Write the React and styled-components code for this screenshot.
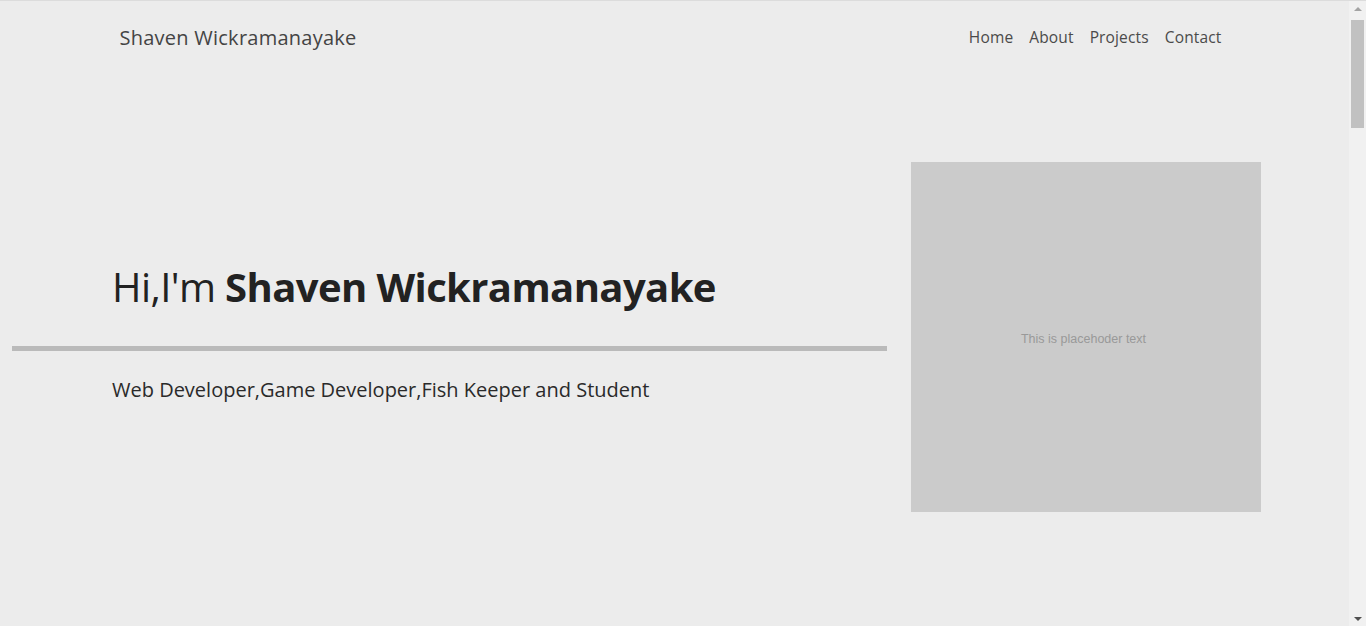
import styled, { createGlobalStyle } from 'styled-components';

const GlobalStyle = createGlobalStyle`
  html, body {
    margin: 0;
    padding: 0;
  }
  body {
    background: #ececec;
    border-top: 1px solid #dcdcdc;
    font-family: "Open Sans", "Noto Sans", sans-serif;
    color: #212529;
    overflow: hidden;
  }
`;

const Shell = styled.div`
  display: flex;
  height: calc(100vh - 1px);
`;

const Page = styled.main`
  flex: 1;
  min-width: 0;
`;

const ScrollBar = styled.div`
  flex: 0 0 17px;
  display: flex;
  flex-direction: column;
  align-items: center;
  background: #f1f1f1;
`;

const Arrow = styled.div`
  flex: 0 0 17px;
  display: flex;
  align-items: center;
  justify-content: center;

  &::before {
    content: '';
    border-left: 4px solid transparent;
    border-right: 4px solid transparent;
    ${(p) =>
      p.$down
        ? 'border-top: 4px solid #505050; margin-top: 2px;'
        : 'border-bottom: 4px solid #a3a3a3; margin-top: -2px;'}
  }
`;

const Track = styled.div`
  flex: 1;
  width: 100%;
  display: flex;
  justify-content: center;
  padding-top: 2px;
`;

const Thumb = styled.div`
  width: 13px;
  height: 108px;
  background: #c1c1c1;
`;

const NavBar = styled.nav`
  max-width: 1140px;
  margin: 0 auto;
  padding: 0 15px;
  height: 72px;
  display: flex;
  align-items: center;
  justify-content: space-between;
  box-sizing: border-box;
`;

const Brand = styled.a`
  font-size: 20px;
  color: #444;
  text-decoration: none;
  letter-spacing: 0.25px;
`;

const NavList = styled.ul`
  display: flex;
  list-style: none;
  margin: 0;
  padding: 0;
`;

const NavLink = styled.a`
  display: block;
  padding: 8px 8px;
  font-size: 15.5px;
  color: #4a4a4a;
  text-decoration: none;
  letter-spacing: 0.15px;
`;

const Hero = styled.section`
  display: flex;
  align-items: center;
  padding: 89px 0 0 12px;
`;

const Intro = styled.div`
  flex: 0 0 875px;
  display: flex;
  flex-direction: column;
  padding-bottom: 8px;
`;

const Greeting = styled.h1`
  margin: 0;
  padding: 0 0 0 100px;
  font-size: 40px;
  font-weight: 400;
  line-height: 48px;
  color: #222;
  letter-spacing: -0.6px;

  & strong {
    font-weight: 700;
  }
`;

const Rule = styled.hr`
  margin: 35px 0 25px;
  border: 0;
  height: 5px;
  background: #bababa;
`;

const Tagline = styled.p`
  margin: 0;
  padding: 0 0 0 100px;
  font-size: 20px;
  line-height: 27px;
  color: #2a2a2a;
`;

const Placeholder = styled.div`
  flex: 0 0 350px;
  height: 350px;
  margin-left: 24px;
  background: #cbcbcb;
  display: flex;
  align-items: center;
  justify-content: center;
  font-family: "Liberation Sans", Arial, sans-serif;
  font-size: 12.5px;
  color: #999;
  padding: 4px 5px 0 0;
  box-sizing: border-box;
`;

const links = ['Home', 'About', 'Projects', 'Contact'];

function App() {
  return (
    <>
      <GlobalStyle />
      <Shell>
        <Page>
          <NavBar>
            <Brand href="#">Shaven Wickramanayake</Brand>
            <NavList>
              {links.map((l) => (
                <li key={l}>
                  <NavLink href="#">{l}</NavLink>
                </li>
              ))}
            </NavList>
          </NavBar>
          <Hero>
            <Intro>
              <Greeting>
                Hi,I'm <strong>Shaven Wickramanayake</strong>
              </Greeting>
              <Rule />
              <Tagline>Web Developer,Game Developer,Fish Keeper and Student</Tagline>
            </Intro>
            <Placeholder>This is placehoder text</Placeholder>
          </Hero>
        </Page>
        <ScrollBar>
          <Arrow />
          <Track>
            <Thumb />
          </Track>
          <Arrow $down />
        </ScrollBar>
      </Shell>
    </>
  );
}

export default App;
